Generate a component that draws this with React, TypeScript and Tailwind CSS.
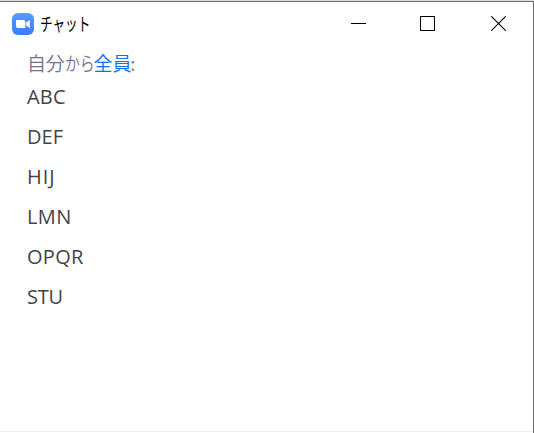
const messages = [
  { text: 'ABC', tracking: 'tracking-[0.2px]' },
  { text: 'DEF', tracking: 'tracking-[0px]' },
  { text: 'HIJ', tracking: 'tracking-[0.9px]' },
  { text: 'LMN', tracking: 'tracking-[0.4px]' },
  { text: 'OPQR', tracking: 'tracking-[0.3px]' },
  { text: 'STU', tracking: 'tracking-[-0.2px]' },
];

function ZoomLogo() {
  return (
    <svg width="22" height="22" viewBox="0 0 22 22" className="shrink-0">
      <defs>
        <linearGradient id="logo" x1="0" y1="0" x2="0" y2="1">
          <stop offset="0" stopColor="#559dff" />
          <stop offset="1" stopColor="#3b7cf8" />
        </linearGradient>
      </defs>
      <rect width="22" height="22" rx="6" fill="url(#logo)" />
      <path d="M4 7h7.4a2 2 0 0 1 2 2v6H6a2 2 0 0 1-2-2z" fill="#fff" />
      <path d="M14.2 9.6L17.8 7v8l-3.6-2.6z" fill="#fff" />
    </svg>
  );
}

function WindowControls() {
  return (
    <div className="ml-auto flex items-center pr-[27px]" aria-label="window controls">
      <svg width="15" height="15" shapeRendering="crispEdges" className="mr-[54px]">
        <path d="M0 7.5h15" stroke="#000" />
      </svg>
      <svg width="15" height="15" shapeRendering="crispEdges" className="mr-[56px]">
        <rect x=".5" y=".5" width="14" height="14" fill="none" stroke="#000" />
      </svg>
      <svg width="15" height="15">
        <path d="M.3.3l14.4 14.4M14.7.3L.3 14.7" stroke="#000" strokeWidth="1.1" />
      </svg>
    </div>
  );
}

export default function App() {
  return (
    <div className="flex h-[433px] w-[534px] flex-col overflow-hidden border-t border-[#dcdcdc] bg-white font-['Open_Sans','Noto_Sans_CJK_JP',sans-serif]">
      <div className="flex flex-1 flex-col border-t border-r border-[#6d6d6d]">
        <header className="flex h-[43px] items-center pl-3">
          <ZoomLogo />
          <span className="ml-[6px] w-[52px] origin-left scale-x-[.7] pb-[2px] font-['Noto_Sans_CJK_JP',sans-serif] text-[18px] leading-[22px] whitespace-nowrap text-black">
            チャット
          </span>
          <WindowControls />
        </header>
        <main className="flex-1 pl-[27px]">
          <div className="flex h-[38px] items-center pb-[3px] font-['Noto_Sans_CJK_JP',sans-serif] text-[19px] leading-[24px] font-[350] text-[#747487]">
            <span className="tracking-[-0.2px]">自分</span>
            <span className="w-[29px] origin-left scale-x-[.78] whitespace-nowrap">から</span>
            <span className="tracking-[-0.2px] text-[#0e71eb]">全員</span>
            <span className="-ml-px">:</span>
          </div>
          {messages.map((m) => (
            <p key={m.text} className={`h-10 text-[20px] leading-[28px] text-[#444444] ${m.tracking}`}>
              {m.text}
            </p>
          ))}
        </main>
        <div className="mb-px h-px bg-[#ededf4]" />
      </div>
    </div>
  );
}
